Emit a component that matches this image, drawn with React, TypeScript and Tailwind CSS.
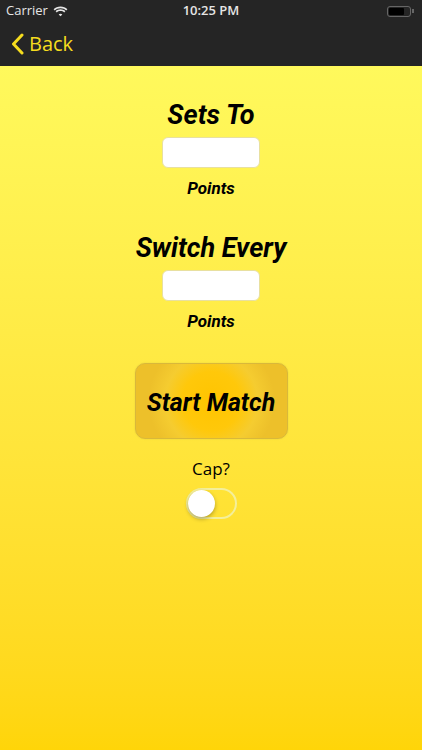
import React, { useState } from 'react';

export default function App() {
  const [cap, setCap] = useState(false);

  return (
    <div className="w-[422px] h-[750px] flex flex-col overflow-hidden font-['Roboto',sans-serif]">
      {/* status + nav bar */}
      <div className="bg-[#252525] h-[66px] shrink-0 flex flex-col">
        <div className="h-[22px] flex items-center justify-between px-[6px] text-[13px] text-[#e5e5e5] font-['Open_Sans',sans-serif]">
          <div className="flex items-center gap-[5px] w-[100px]">
            <span>Carrier</span>
            <svg width="15" height="11" viewBox="0 0 15 11" fill="#e5e5e5">
              <path d="M7.5 2.2c2.2 0 4.2.8 5.7 2.2l1.2-1.2C12.6 1.5 10.2.5 7.5.5S2.4 1.5.6 3.2l1.2 1.2c1.5-1.4 3.5-2.2 5.7-2.2z" />
              <path d="M7.5 5c1.4 0 2.7.5 3.7 1.4l1.2-1.2C11.1 4 9.4 3.3 7.5 3.3S3.9 4 2.6 5.2l1.2 1.2C4.8 5.5 6.1 5 7.5 5z" />
              <path d="M7.5 7.7c.7 0 1.3.3 1.8.7L7.5 10.3 5.7 8.4c.5-.4 1.1-.7 1.8-.7z" />
            </svg>
          </div>
          <span className="font-semibold">10:25 PM</span>
          <div className="w-[100px] flex justify-end pr-[2px]">
            <div className="w-[24px] h-[11px] rounded-[3px] border border-[#666] p-[1px] flex">
              <div className="w-[15px] h-full bg-black rounded-[1px]" />
            </div>
            <div className="w-[1.5px] h-[4px] bg-[#666] self-center ml-[1px]" />
          </div>
        </div>
        <div className="flex-1 flex items-center pl-[11px] gap-[5px] text-[#f5dc1e]">
          <svg width="13" height="22" viewBox="0 0 13 22" fill="none" stroke="#f5dc1e" strokeWidth="3" strokeLinecap="round" strokeLinejoin="round">
            <path d="M11 2 L2.5 11 L11 20" />
          </svg>
          <span className="text-[20px] font-['Open_Sans',sans-serif]">Back</span>
        </div>
      </div>

      {/* content */}
      <div className="flex-1 bg-gradient-to-b from-[#fff95c] to-[#ffd508] flex flex-col items-center pt-[33px]">
        <h2 className="text-[27px] leading-[32px] font-bold italic text-black">Sets To</h2>
        <input className="mt-[6px] w-[98px] h-[31px] bg-white rounded-[6px] border border-[#e8e0a0] outline-none" />
        <span className="mt-[10px] text-[17px] leading-[20px] font-bold italic text-black">Points</span>

        <h2 className="mt-[34px] text-[27px] leading-[32px] font-bold italic text-black">Switch Every</h2>
        <input className="mt-[6px] w-[98px] h-[31px] bg-white rounded-[6px] border border-[#e8e0a0] outline-none" />
        <span className="mt-[10px] text-[17px] leading-[20px] font-bold italic text-black">Points</span>

        <button className="mt-[32px] w-[153px] h-[76px] rounded-[10px] border border-[#d9b83a] bg-[radial-gradient(circle_at_center,#ffc400_0%,#ffc80a_35%,#f5cc30_55%,#edc02a_75%)] flex items-center justify-center shadow-[0_0_2px_rgba(0,0,0,0.1)]">
          <span className="text-[25px] font-bold italic text-black translate-y-[2px]">Start Match</span>
        </button>

        <span className="mt-[20px] text-[17px] leading-[20px] text-black font-['Open_Sans',sans-serif]">Cap?</span>

        <button
          onClick={() => setCap(!cap)}
          className={`mt-[9px] w-[51px] h-[31px] rounded-full border-2 flex items-center ${cap ? 'bg-[#4cd964] border-[#4cd964] justify-end' : 'bg-transparent border-[#f4ef9a] justify-start'}`}
        >
          <div className="w-[27px] h-[27px] rounded-full bg-white shadow-[0_2px_4px_rgba(0,0,0,0.3)]" />
        </button>
      </div>
    </div>
  );
}
